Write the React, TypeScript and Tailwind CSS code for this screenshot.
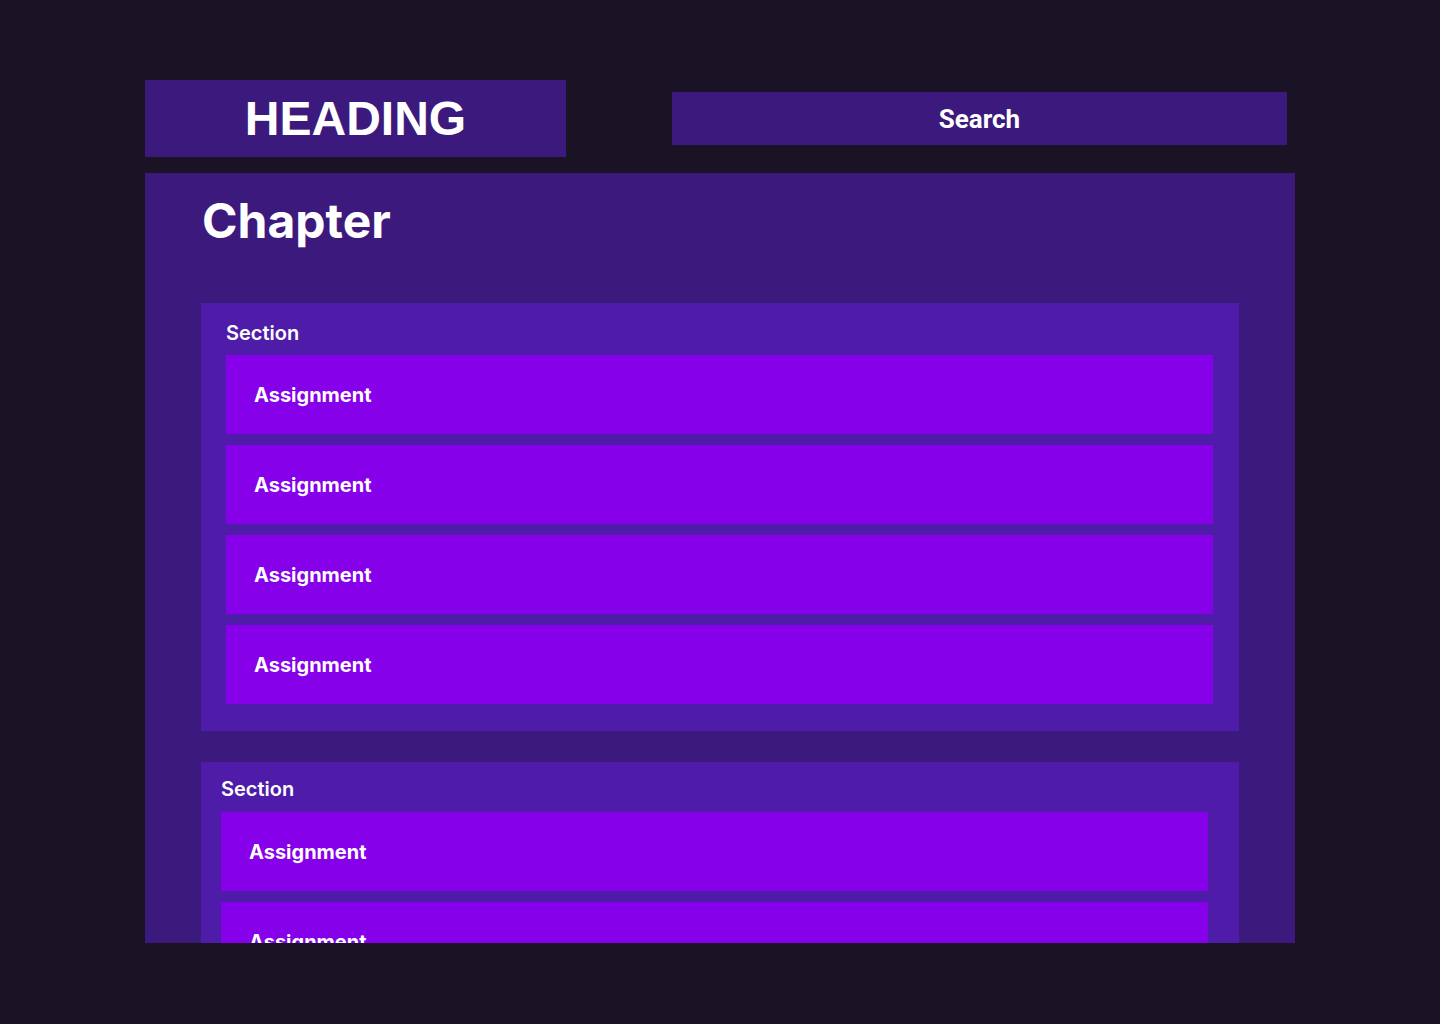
const assignments = ["Assignment", "Assignment", "Assignment", "Assignment"];

function Section({ inset }: { inset: "wide" | "narrow" }) {
  const wide = inset === "wide";
  return (
    <div className={`bg-[#4e1ca9] ${wide ? "pl-[25px] pr-[26px] pt-[15px]" : "pl-5 pr-[31px] pt-3"} pb-[27px]`}>
      <h3 className="text-[20px] leading-[30px] font-semibold text-white">Section</h3>
      <div className={`${wide ? "mt-[7px]" : "mt-2"} flex flex-col gap-[11px]`}>
        {assignments.map((a, i) => (
          <div key={i} className="h-[79px] bg-[#8700ea] flex items-center pl-[28px]">
            <span className="text-[20px] font-bold text-white">{a}</span>
          </div>
        ))}
      </div>
    </div>
  );
}

export default function App() {
  return (
    <div className="w-[1440px] h-[1024px] bg-[#1a1225] font-['Inter',sans-serif] overflow-hidden">
      <div className="ml-[145px] w-[1150px] pt-20">
        {/* Top bar */}
        <div className="flex items-start">
          <div className="w-[421px] h-[77px] bg-[#3c1a7d] flex items-center justify-center">
            <h1 className="font-['Liberation_Sans',Arial,sans-serif] text-[48px] font-bold text-white leading-none">
              HEADING
            </h1>
          </div>
          <div className="ml-[106px] mt-3 w-[615px] h-[53px] bg-[#3c1a7d] flex items-center justify-center pt-0.5">
            <span className="font-['Roboto',sans-serif] text-[26px] font-bold text-white">Search</span>
          </div>
        </div>

        {/* Chapter panel */}
        <div className="mt-4 h-[770px] bg-[#3c1a7d] overflow-hidden px-14 pt-[18px]">
          <h2 className="pl-px text-[48px] leading-[60px] font-bold text-white">Chapter</h2>
          <div className="mt-[52px] flex flex-col gap-[31px]">
            <Section inset="wide" />
            <Section inset="narrow" />
          </div>
        </div>
      </div>
    </div>
  );
}
